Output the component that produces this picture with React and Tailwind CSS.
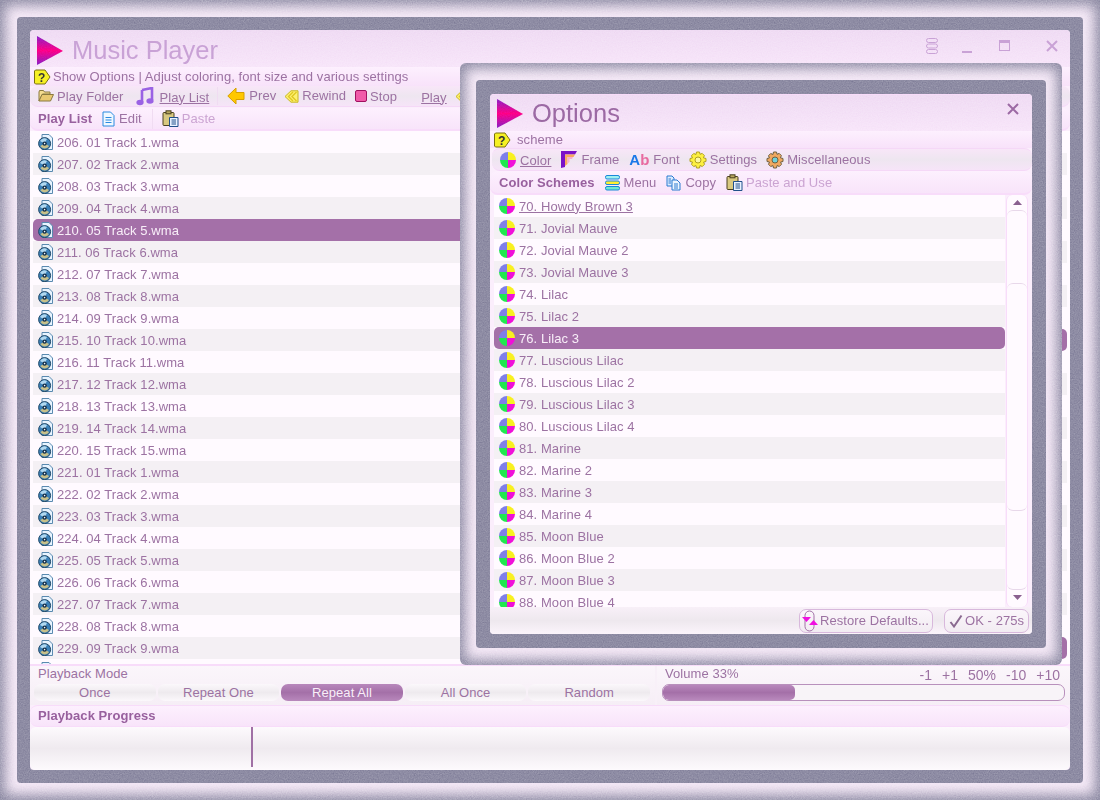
import React from "react";

const tracks = [];
for (let i = 0; i < 25; i++) {
  const n = i < 15 ? i + 1 : i - 14;
  tracks.push(`${206 + i}. ${String(n).padStart(2, "0")} Track ${n}.wma`);
}

const schemes = [
  "70. Howdy Brown 3", "71. Jovial Mauve", "72. Jovial Mauve 2", "73. Jovial Mauve 3", "74. Lilac", "75. Lilac 2",
  "76. Lilac 3", "77. Luscious Lilac", "78. Luscious Lilac 2", "79. Luscious Lilac 3", "80. Luscious Lilac 4",
  "81. Marine", "82. Marine 2", "83. Marine 3", "84. Marine 4", "85. Moon Blue", "86. Moon Blue 2", "87. Moon Blue 3", "88. Moon Blue 4",
];

const modes = ["Once", "Repeat One", "Repeat All", "All Once", "Random"];

// grain used on the frames and title bars
const Noise = ({ id, className }) => (
  <svg className={`absolute inset-0 w-full h-full pointer-events-none ${className}`}>
    <filter id={id} colorInterpolationFilters="sRGB">
      <feTurbulence type="fractalNoise" baseFrequency="0.8" numOctaves="2" seed="4" />
      <feColorMatrix type="matrix" values="0.33 0.33 0.33 0 0 0.33 0.33 0.33 0 0 0.33 0.33 0.33 0 0 0 0 0 0 1" />
    </filter>
    <rect width="100%" height="100%" filter={`url(#${id})`} />
  </svg>
);

const PlayLogo = ({ id, className }) => (
  <svg width="28" height="30" viewBox="0 0 28 30" className={`shrink-0 ${className}`}>
    <defs>
      <linearGradient id={id} x1="0" y1="0" x2="0" y2="1">
        <stop offset="0" stopColor="#8a20c8" />
        <stop offset="0.5" stopColor="#ff0088" />
        <stop offset="1" stopColor="#8a20c8" />
      </linearGradient>
    </defs>
    <path d="M1 0 L27 15 L1 29 Z" fill={`url(#${id})`} />
  </svg>
);

const Help = () => (
  <svg width="17" height="16" viewBox="0 0 17 16" className="shrink-0">
    <path d="M1.5 1 H11 L16 8 L11 15 H1.5 L.5 14 V2 Z" fill="#f6f024" stroke="#7a7010" />
    <text x="4" y="12.5" fontSize="12" fontWeight="700" fill="#333" fontFamily="Liberation Sans">?</text>
  </svg>
);

const FolderIcon = () => (
  <svg width="16" height="14" viewBox="0 0 16 14">
    <path d="M1 3 L1.5 1.5 H5.5 L6.5 3 H12 V5 H4.5 L1 12 Z" fill="#f4dc90" stroke="#8a7a40" />
    <path d="M1 12 L4 5.5 H15.5 L12.5 12 Z" fill="#e8c870" stroke="#8a7a40" />
  </svg>
);

const MusicIcon = () => (
  <svg width="18" height="19" viewBox="0 0 18 19">
    <path d="M6 3 L16 1 V13" fill="none" stroke="#9a62e4" strokeWidth="2.6" />
    <path d="M6 3 V15" fill="none" stroke="#9a62e4" strokeWidth="2.6" />
    <ellipse cx="4" cy="15.5" rx="3.6" ry="2.8" fill="#9a62e4" />
    <ellipse cx="14" cy="14" rx="3.6" ry="2.8" fill="#9a62e4" />
  </svg>
);

const PrevIcon = () => (
  <svg width="18" height="18" viewBox="0 0 18 18">
    <path d="M.8 9 L9 1 V5.5 H17 V12.5 H9 V17 Z" fill="#ffc800" stroke="#d8a000" />
  </svg>
);

const RewindIcon = () => (
  <svg width="15" height="13" viewBox="0 0 15 13">
    <path d="M7 .8 H14 V12.2 H7 L1 6.5 Z" fill="#fdf070" stroke="#c8b820" />
    <path d="M9 2 L4.5 6.5 L9 11 M12.5 2 L8 6.5 L12.5 11" fill="none" stroke="#e0c820" strokeWidth="1.4" />
  </svg>
);

const StopIcon = () => (
  <svg width="12" height="12" viewBox="0 0 12 12">
    <rect x=".5" y=".5" width="11" height="11" rx="1.5" fill="#f05aa8" stroke="#a01060" />
  </svg>
);

const EditIcon = () => (
  <svg width="13" height="16" viewBox="0 0 13 16">
    <path d="M1 1 H8.5 L12 4.5 V15 H1 Z" fill="#f0f8ff" stroke="#2a8ae0" />
    <path d="M3.5 6.5 H9.5 M3.5 9 H9.5 M3.5 11.5 H9.5" stroke="#2a8ae0" />
  </svg>
);

const PasteIcon = () => (
  <svg width="17" height="17" viewBox="0 0 17 17">
    <rect x="1" y="2.5" width="11" height="13" rx="1" fill="#d8c880" stroke="#4a4020" />
    <rect x="4" y=".8" width="5" height="3" fill="#b8a860" stroke="#4a4020" />
    <path d="M7.5 7.5 H16 V16.5 H7.5 Z" fill="#e8f2ff" stroke="#20508a" />
    <path d="M9.5 10 H14 M9.5 12 H14 M9.5 14 H14" stroke="#20508a" />
  </svg>
);

const CopyIcon = () => (
  <svg width="15" height="16" viewBox="0 0 15 16">
    <path d="M1 1 H6 L8 3 V11 H1 Z" fill="#dcecff" stroke="#2a7ad0" />
    <path d="M6 5 H11 L14 8 V15 H6 Z" fill="#eef6ff" stroke="#2a7ad0" />
    <path d="M8 9 H12 M8 11 H12 M8 13 H12 M2.5 4 H5 M2.5 6 H5 M2.5 8 H5" stroke="#2a7ad0" />
  </svg>
);

const MenuIcon = () => (
  <svg width="15" height="16" viewBox="0 0 15 16">
    <rect x=".5" y=".5" width="14" height="3.5" rx="1.5" fill="#a0f0f0" stroke="#1a88d8" />
    <rect x=".5" y="6" width="14" height="3.5" rx="1.5" fill="#fff030" stroke="#1a88d8" />
    <rect x=".5" y="11.5" width="14" height="3.5" rx="1.5" fill="#70e8d0" stroke="#1a88d8" />
  </svg>
);

const DiscIcon = () => (
  <svg width="15" height="16" viewBox="0 0 15 16" className="shrink-0">
    <path d="M4 .5 H11 L14.5 4 V15.5 H4 Z" fill="#e8f4ff" stroke="#5a8ab0" />
    <circle cx="6.6" cy="9.6" r="6" fill="#3a80b8" stroke="#244a68" />
    <path d="M2 7 A5 5 0 0 1 9 5 L6.6 9.6 Z" fill="#b0d8f0" />
    <path d="M2.4 12 A5 5 0 0 0 11 12 L6.6 9.6 Z" fill="#c8c088" />
    <circle cx="6.6" cy="9.6" r="2.2" fill="#14304a" />
    <circle cx="6.6" cy="9.6" r="0.8" fill="#f0f8ff" />
  </svg>
);

const Wheel = () => (
  <svg width="16" height="16" viewBox="0 0 16 16" className="shrink-0">
    <path d="M8 8 V0 A8 8 0 0 0 0 8 Z" fill="#7f7fe8" />
    <path d="M8 8 V0 A8 8 0 0 1 16 8 Z" fill="#f8f020" />
    <path d="M8 8 H16 A8 8 0 0 1 8 16 Z" fill="#f010d8" />
    <path d="M8 8 V16 A8 8 0 0 1 0 8 Z" fill="#20e850" />
  </svg>
);

const FrameIcon = () => (
  <svg width="17" height="17" viewBox="0 0 17 17">
    <path d="M1 0 H17 L15 3.5 H5 V16 L1 17 Z" fill="#7a10c8" />
    <path d="M5 3.5 H15 L13.5 6 H7.5 V13 L5 15 Z" fill="#f8a860" />
    <path d="M7.5 6 H13 L12 8 H9.5 V11 L7.5 12.5 Z" fill="#f8b0d0" />
  </svg>
);

const Gear = ({ fill, stroke, inner }) => (
  <svg width="18" height="18" viewBox="0 0 18 18">
    <path
      d="M7.5 1 H10.5 L11 3.3 L13.2 2.4 L15.4 4.6 L14.4 6.8 L17 7.5 V10.5 L14.6 11 L15.5 13.3 L13.3 15.5 L11 14.5 L10.5 17 H7.5 L7 14.6 L4.7 15.5 L2.5 13.3 L3.5 11 L1 10.5 V7.5 L3.4 7 L2.5 4.7 L4.7 2.5 L7 3.5 Z"
      fill={fill}
      stroke={stroke}
    />
    <circle cx="9" cy="9" r="3" fill={inner} stroke={stroke} />
  </svg>
);

const RestoreIcon = () => (
  <svg width="18" height="22" viewBox="0 0 18 22">
    <rect x="4" y="1" width="9" height="20" rx="4.5" fill="none" stroke="#a070a5" />
    <path d="M1 7 H10 L5.5 12 Z M8 15 L12.5 10 L17 15 Z" fill="#f010e0" />
  </svg>
);

const Check = () => (
  <svg width="14" height="14" viewBox="0 0 14 14">
    <path d="M1.5 8 L5 12.5 L12.5 1.5" fill="none" stroke="#8a6a90" strokeWidth="2" />
  </svg>
);

const Arrow = ({ down }) => (
  <svg width="9" height="5" viewBox="0 0 9 5">
    <path d={down ? "M0 0 H9 L4.5 5 Z" : "M0 5 H9 L4.5 0 Z"} fill="#8a6090" />
  </svg>
);

const Row = ({ icon, label, index, selected, underline }) => (
  <div
    className={`h-[22px] shrink-0 flex items-center gap-[4px] pl-[5px] whitespace-nowrap ${
      selected ? "bg-[#a470a8] text-[#f8eef8] rounded-[5px]" : index % 2 ? "bg-[#f4f0f4]" : "bg-[#fffaff]"
    }`}
  >
    {icon}
    <span className={underline ? "underline pt-px" : "pt-px"}>{label}</span>
  </div>
);

const Bar = ({ className, children }) => (
  <div className={`shrink-0 flex items-center whitespace-nowrap ${className}`}>{children}</div>
);

export default function App() {
  return (
    <div className="relative w-[1100px] h-[800px] overflow-hidden font-['Liberation_Sans',sans-serif] text-[13px] tracking-[0.07px] text-[#9c72a2] bg-[#f6eaf8] shadow-[inset_0_0_13px_5px_#8e8ca4] px-[17px] py-[17px]">
      <Noise id="n1" className="opacity-40 mix-blend-overlay" />

      {/* main window */}
      <div className="relative h-full rounded-[4px] bg-[#8e8ca4] p-[13px]">
        <Noise id="n2" className="opacity-30 mix-blend-overlay" />
        <div className="relative h-full flex flex-col rounded-[4px] overflow-hidden bg-[#fbeefc]">
          <div className="relative h-[37px] shrink-0 flex items-center pl-[6px] bg-linear-to-b from-[#f0dcf4] to-[#f8e6fa]">
            <Noise id="n3" className="opacity-35 mix-blend-overlay" />
            <PlayLogo id="logo1" className="mt-[4px]" />
            <span className="relative ml-[8px] mt-[4px] text-[25.5px] tracking-normal text-[#c9a2d6]">Music Player</span>
            <div className="relative ml-auto flex items-center text-[#c9a2d6]">
              <svg className="mb-[4px]" width="12" height="17" viewBox="0 0 12 17">
                <rect x=".5" y=".5" width="11" height="4" rx="2" fill="none" stroke="#c9a2d6" />
                <rect x=".5" y="6" width="11" height="4" rx="2" fill="none" stroke="#c9a2d6" />
                <rect x=".5" y="11.5" width="11" height="4" rx="2" fill="none" stroke="#c9a2d6" />
              </svg>
              <div className="ml-[24px] mt-[6px] w-[10px] h-[2px] bg-[#c9a2d6]" />
              <div className="ml-[27px] mb-[6px] w-[11px] h-[11px] border border-[#c9a2d6] border-t-[3px]" />
              <svg className="ml-[36px] mr-[12px] mb-[6px]" width="12" height="12" viewBox="0 0 12 12">
                <path d="M1 1 L11 11 M11 1 L1 11" stroke="#c9a2d6" strokeWidth="2" />
              </svg>
            </div>
          </div>

          <Bar className="h-[19px] pl-[4px] gap-[2px] bg-linear-to-b from-[#fdf0fe] to-[#f8e2fa]">
            <Help />
            <span className="mt-[1px]">Show Options | Adjust coloring, font size and various settings</span>
          </Bar>

          <Bar className="h-[21px] mb-px pl-[8px] rounded-[8px] bg-linear-to-b from-[#f8e6f8] via-[#eee6f0] to-[#f6e4f8] border-b border-[#f5d8f7]">
            <FolderIcon />
            <span className="ml-[3px] mt-[1px]">Play Folder</span>
            <span className="ml-[12px]"><MusicIcon /></span>
            <span className="ml-[6px] underline mt-[3px]">Play List</span>
            <span className="ml-[8px] w-px h-[18px] bg-[#f0dcf2]" />
            <span className="ml-[9px]"><PrevIcon /></span>
            <span className="ml-[4px]">Prev</span>
            <span className="ml-[8px]"><RewindIcon /></span>
            <span className="ml-[3px]">Rewind</span>
            <span className="ml-[9px]"><StopIcon /></span>
            <span className="ml-[3px] mt-[1px]">Stop</span>
            <span className="ml-[24px] underline mt-[3px]">Play</span>
            <span className="ml-[8px]"><RewindIcon /></span>
          </Bar>

          <Bar className="h-[23px] pl-[8px] rounded-[8px] bg-linear-to-b from-[#fdf0fe] to-[#f8e4fa] border-b-2 border-[#f8dcfa]">
            <span className="font-bold text-[#98609e]">Play List</span>
            <span className="ml-[10px]"><EditIcon /></span>
            <span className="ml-[4px]">Edit</span>
            <span className="ml-[10px] w-px h-[20px] bg-[#f0dcf2]" />
            <span className="ml-[9px]"><PasteIcon /></span>
            <span className="ml-[3px] text-[#cba4d2]">Paste</span>
          </Bar>

          <div className="h-[533px] shrink-0 flex overflow-hidden pl-[3px] pr-[3px] bg-[#fffaff]">
            <div className="flex-1 flex flex-col">
              {tracks.map((t, i) => (
                <Row key={t} index={i} label={i === 24 ? "" : t} selected={i === 4} icon={<DiscIcon />} />
              ))}
            </div>
            <div className="w-[300px] flex flex-col">
              {tracks.map((t, i) => (
                <Row key={t} index={i} label="" selected={i === 9 || i === 23} />
              ))}
            </div>
          </div>

          <div className="h-[41px] shrink-0 flex border-t-2 border-[#f8dcfa] bg-linear-to-b from-[#fbf6fb] to-[#f6eef6]">
            <div className="w-[625px] pl-[4px] pr-[5px]">
              <div className="pl-[4px] h-[18px] leading-[15px]">Playback Mode</div>
              <div className="flex gap-[2px]">
                {modes.map((m) =>
                  m === "Repeat All" ? (
                    <div key={m} className="flex-1 h-[17px] flex items-center justify-center rounded-[7px] text-[#f8eef8] bg-linear-to-b from-[#b888bc] via-[#a470a8] to-[#b888bc]">
                      {m}
                    </div>
                  ) : (
                    <div key={m} className="flex-1 h-[17px] flex items-center justify-center rounded-[7px] bg-linear-to-b from-[#fbf8fb] via-[#eeeaee] to-[#fbf8fb]">
                      {m}
                    </div>
                  )
                )}
              </div>
            </div>
            <div className="flex-1 pl-[5px] pr-[5px] border-l-2 border-[#f8f0f8]">
              <div className="flex h-[18px] leading-[15px] text-[#9c72a2]">
                <span className="ml-[3px]">Volume 33%</span>
                <span className="ml-auto mr-[5px] mt-[1px] flex gap-[10px] tracking-normal text-[14px] leading-[16px]">
                  <span>-1</span>
                  <span>+1</span>
                  <span>50%</span>
                  <span>-10</span>
                  <span>+10</span>
                </span>
              </div>
              <div className="h-[17px] rounded-[7px] border border-[#b890bc] bg-[#f8f4f8] overflow-hidden">
                <div className="w-[33%] h-full rounded-[5px] bg-linear-to-b from-[#b888bc] via-[#a470a8] to-[#b888bc]" />
              </div>
            </div>
          </div>

          <Bar className="h-[22px] pl-[8px] rounded-[8px] font-bold text-[#98609e] bg-linear-to-b from-[#fdf0fe] to-[#f8e4fa] border-y border-[#f8dcfa]">
            Playback Progress
          </Bar>

          <div className="flex-1 flex rounded-[6px] pl-[221px] bg-linear-to-b from-[#fdfafd] via-[#efeaef] to-[#fdfafd]">
            <div className="w-[2px] h-[40px] bg-[#a070a5]" />
          </div>
        </div>
      </div>

      {/* options dialog, floats over the player */}
      <div className="absolute left-[460px] top-[63px] w-[602px] h-[602px] rounded-[6px] overflow-hidden px-[16px] py-[17px] bg-[#f6eaf8] shadow-[inset_0_0_13px_5px_#8e8ca4]">
        <Noise id="n4" className="opacity-40 mix-blend-overlay" />
        <div className="relative h-full rounded-[4px] bg-[#8e8ca4] p-[14px]">
          <Noise id="n5" className="opacity-30 mix-blend-overlay" />
          <div className="relative h-full flex flex-col rounded-[4px] overflow-hidden bg-[#fbeefc]">
            <div className="relative h-[37px] shrink-0 flex items-center pl-[6px] bg-linear-to-b from-[#f0dcf4] to-[#f8e6fa] border-t border-[#f8dcfa]">
              <Noise id="n6" className="opacity-35 mix-blend-overlay" />
              <PlayLogo id="logo2" className="mt-[2px]" />
              <span className="relative ml-[8px] text-[25.5px] tracking-normal text-[#9c6aa4]">Options</span>
              <svg className="relative ml-auto mr-[13px] mb-[8px]" width="12" height="12" viewBox="0 0 12 12">
                <path d="M1 1 L11 11 M11 1 L1 11" stroke="#9c6aa4" strokeWidth="2" />
              </svg>
            </div>

            <Bar className="h-[17px] pl-[4px] gap-[6px] bg-linear-to-b from-[#fdf0fe] to-[#f8e2fa]">
              <Help />
              <span>scheme</span>
            </Bar>

            <Bar className="h-[23px] ml-[2px] pl-[8px] rounded-[8px] bg-linear-to-b from-[#f8e6f8] via-[#eee6f0] to-[#f6e4f8] border-y border-[#f5d8f7]">
              <Wheel />
              <span className="ml-[4px] underline mt-[2px]">Color</span>
              <span className="ml-[9px]"><FrameIcon /></span>
              <span className="ml-[4px]">Frame</span>
              <span className="ml-[10px] text-[15px] leading-[17px] font-bold tracking-normal text-[#1a78e8]">
                A<span className="text-[#e86aa0]">b</span>
              </span>
              <span className="ml-[4px]">Font</span>
              <span className="ml-[9px]"><Gear fill="#fdf040" stroke="#b0a020" inner="#fdf8a0" /></span>
              <span className="ml-[3px]">Settings</span>
              <span className="ml-[9px]"><Gear fill="#f0a860" stroke="#706040" inner="#70d0d8" /></span>
              <span className="ml-[3px]">Miscellaneous</span>
            </Bar>

            <Bar className="h-[24px] pl-[9px] pt-[1px] rounded-[8px] bg-linear-to-b from-[#fdf0fe] to-[#f8e4fa] border-b-2 border-[#f8dcfa]">
              <span className="font-bold text-[#98609e]">Color Schemes</span>
              <span className="ml-[10px]"><MenuIcon /></span>
              <span className="ml-[4px]">Menu</span>
              <span className="ml-[10px]"><CopyIcon /></span>
              <span className="ml-[4px]">Copy</span>
              <span className="ml-[10px]"><PasteIcon /></span>
              <span className="ml-[3px] text-[#cba4d2]">Paste and Use</span>
            </Bar>

            <div className="h-[412px] shrink-0 flex pl-[4px] pr-[4px] bg-[#fbeefc]">
              <div className="w-[512px] flex flex-col overflow-hidden bg-[#fffaff]">
                {schemes.map((s, i) => (
                  <Row key={s} index={i} label={s} selected={i === 6} underline={i === 0} icon={<Wheel />} />
                ))}
              </div>
              {/* scrollbar */}
              <div className="w-[22px] ml-px flex flex-col items-center border-x border-[#f8dcfa] rounded-[6px] bg-[#fffaff]">
                <div className="h-[15px] flex items-center"><Arrow /></div>
                <div className="w-full h-[380px] flex flex-col border border-t-[#e8d8ea] border-b-[#e8d8ea] border-x-0 rounded-[6px]">
                  <div className="h-[72px] shrink-0" />
                  <div className="h-[228px] shrink-0 border-y border-[#e8d8ea] rounded-[6px]" />
                </div>
                <div className="h-[15px] flex items-center"><Arrow down /></div>
              </div>
            </div>

            <div className="flex-1 flex items-center justify-end pr-[3px] gap-[11px] bg-linear-to-b from-[#f8f0f8] via-[#eee8ee] to-[#fbf4fb]">
              <div className="h-[24px] w-[134px] flex items-center pl-[1px] gap-[1px] rounded-[7px] border border-[#d8b8dc] bg-linear-to-b from-[#fbf6fb] to-[#f2ecf2] whitespace-nowrap">
                <RestoreIcon />
                <span>Restore Defaults...</span>
              </div>
              <div className="h-[24px] w-[85px] flex items-center pl-[4px] gap-[2px] rounded-[7px] border border-[#d8b8dc] bg-linear-to-b from-[#fbf6fb] to-[#f2ecf2] whitespace-nowrap">
                <Check />
                <span>OK - 275s</span>
              </div>
            </div>
          </div>
        </div>
      </div>
    </div>
  );
}
